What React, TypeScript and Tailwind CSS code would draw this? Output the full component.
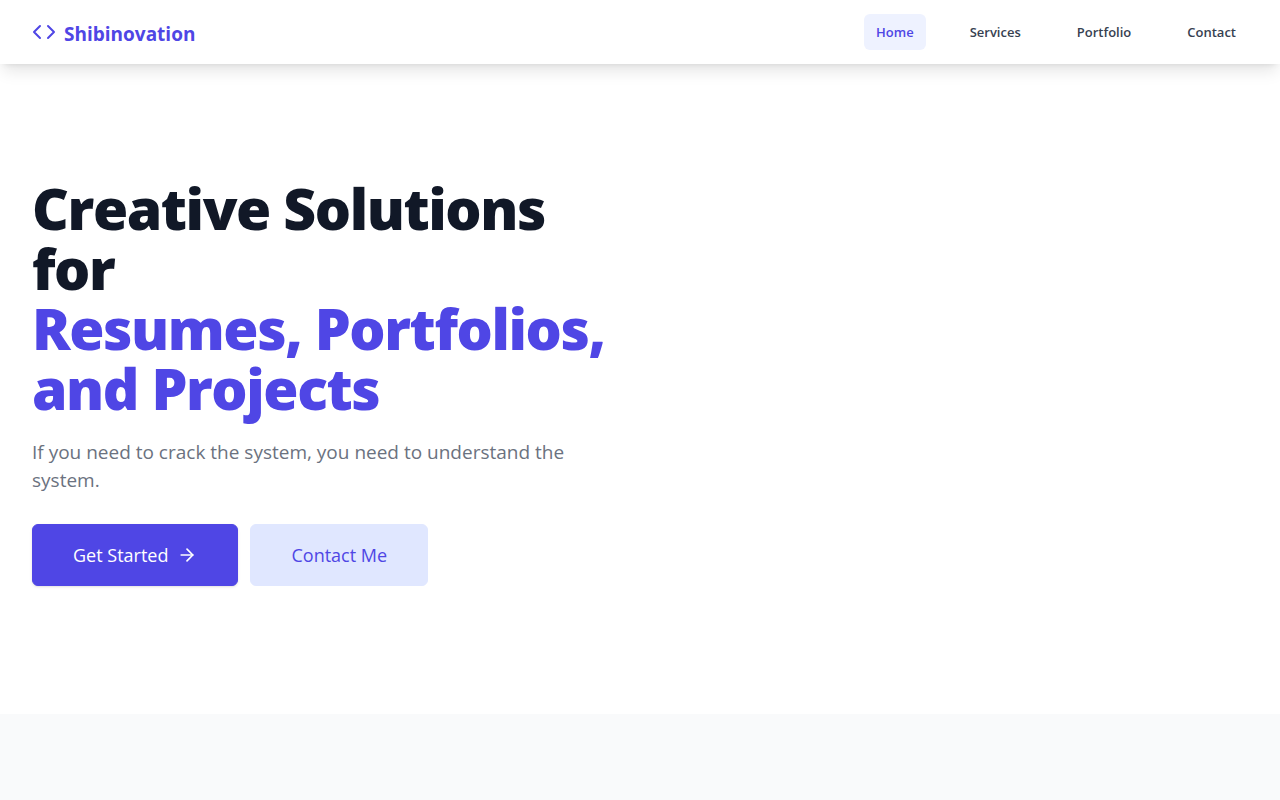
import { ArrowRight, Code } from "lucide-react";

const links = ["Services", "Portfolio", "Contact"];

export default function App() {
  return (
    <div className="min-h-screen bg-white font-['Open_Sans','Noto_Sans',sans-serif]">
      <nav className="relative bg-white shadow-lg">
        <div className="mx-auto flex h-16 max-w-7xl items-center justify-between px-8">
          <a href="#home" className="flex items-center gap-2 text-[#4f46e5]">
            <Code className="size-6" aria-hidden="true" />
            <span className="pt-1 text-[19px] leading-7 font-bold">Shibinovation</span>
          </a>
          <div className="flex items-center gap-8 text-[13px] leading-5 font-semibold text-[#374151]">
            <a href="#home" className="rounded-md bg-[#eef2ff] px-3 py-2 text-[#4f46e5]">Home</a>
            {links.map((link) => (
              <a key={link} href={`#${link.toLowerCase()}`} className="rounded-md px-3 py-2">{link}</a>
            ))}
          </div>
        </div>
      </nav>
      <main>
        <section className="mx-auto max-w-7xl px-8 pt-[114px] pb-32">
          <div className="max-w-[592px]">
            <h1 className="text-[57px] leading-[60px] font-extrabold tracking-tight text-[#111827]">
              <span className="block">Creative Solutions<br />for</span>
              <span className="block text-[#4f46e5]">Resumes, Portfolios, and Projects</span>
            </h1>
            <p className="mt-5 max-w-xl text-[19px] leading-7 text-[#6b7280]">
              If you need to crack the system, you need to understand the system.
            </p>
            <div className="mt-[30px] flex gap-3 text-lg font-medium">
              <a href="#start" className="flex items-center gap-[9px] rounded-md border border-[#4f46e5] bg-[#4f46e5] px-10 py-4 text-white shadow-sm">
                Get Started
                <ArrowRight className="size-5" aria-hidden="true" />
              </a>
              <a href="#contact" className="flex items-center rounded-md border border-[#e0e7ff] bg-[#e0e7ff] px-10 py-4 text-[#4f46e5]">Contact Me</a>
            </div>
          </div>
        </section>
        <section className="h-24 bg-[#f9fafb]" />
      </main>
    </div>
  );
}
